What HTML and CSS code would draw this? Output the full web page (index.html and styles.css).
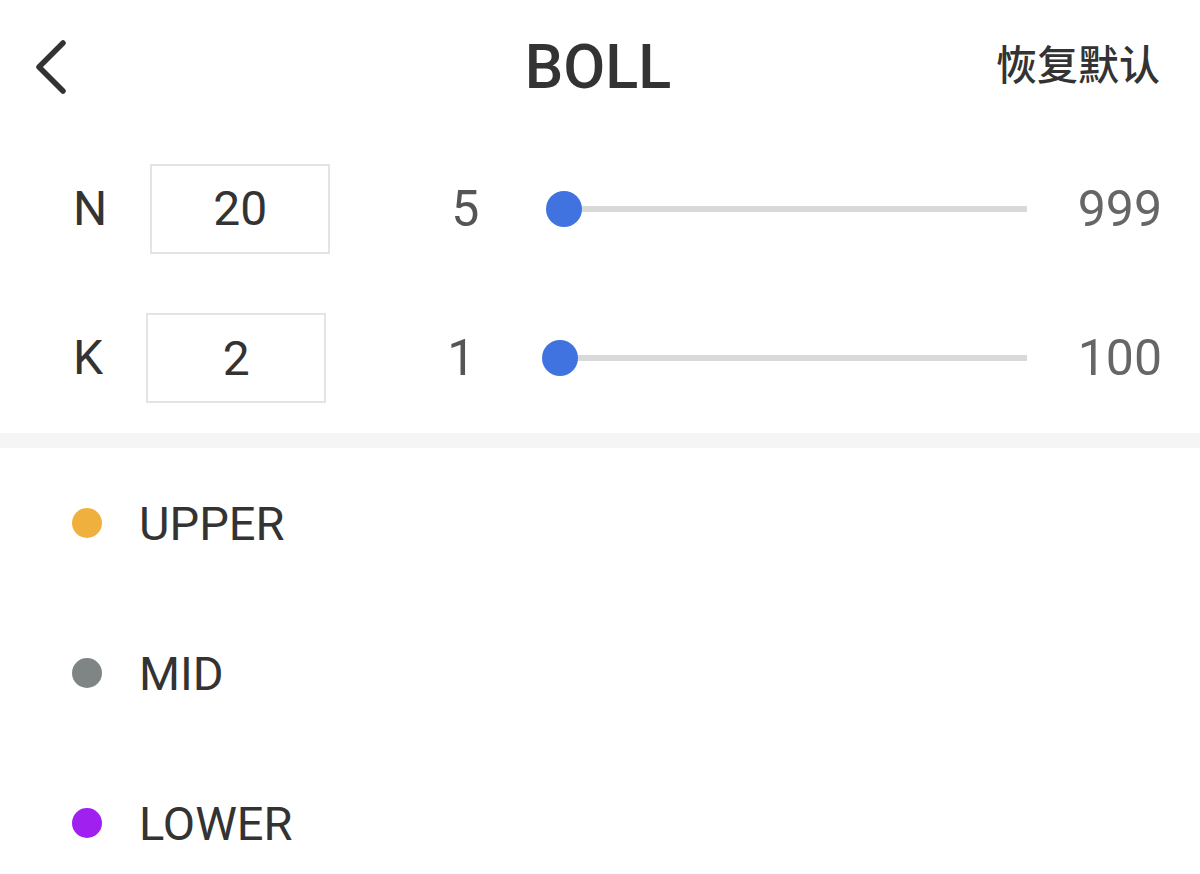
FILE: index.html
```html
<!DOCTYPE html>
<html lang="zh-CN">
<head>
    <meta charset="UTF-8">
    <meta name="viewport" content="width=device-width, initial-scale=1.0">
    <title>BOLL</title>
    <link rel="stylesheet" href="styles.css">
</head>
<body>
    <div class="page">
        <div class="header">
            <div class="back-btn">
                <svg width="40" height="60" viewBox="0 0 40 60">
                    <polyline points="27,6 3,30 27,54" fill="none" stroke="#333" stroke-width="5.5" stroke-linecap="round" stroke-linejoin="round"/>
                </svg>
            </div>
            <div class="title">BOLL</div>
            <div class="reset">恢复默认</div>
        </div>

        <div class="params">
            <div class="param-row">
                <div class="param-label">N</div>
                <div class="param-box">20</div>
                <div class="range-min">5</div>
                <div class="slider">
                    <div class="slider-track"></div>
                    <div class="slider-thumb"></div>
                </div>
                <div class="range-max">999</div>
            </div>
            <div class="param-row">
                <div class="param-label">K</div>
                <div class="param-box">2</div>
                <div class="range-min">1</div>
                <div class="slider">
                    <div class="slider-track"></div>
                    <div class="slider-thumb"></div>
                </div>
                <div class="range-max">100</div>
            </div>
        </div>

        <div class="divider"></div>

        <div class="lines">
            <div class="line-row">
                <span class="dot dot-upper"></span>
                <span class="line-name">UPPER</span>
            </div>
            <div class="line-row">
                <span class="dot dot-mid"></span>
                <span class="line-name">MID</span>
            </div>
            <div class="line-row">
                <span class="dot dot-lower"></span>
                <span class="line-name">LOWER</span>
            </div>
        </div>
    </div>
</body>
</html>
```

FILE: styles.css
```css
body {
    margin: 0;
    font-family: Roboto, 'Noto Sans CJK SC', sans-serif;
    background: #fff;
    color: #333;
}
.page {
    width: 1200px;
    height: 874px;
    overflow: hidden;
}
.header {
    display: grid;
    grid-template-columns: 1fr auto 1fr;
    align-items: center;
    height: 134px;
    padding: 0 40px 0 36px;
}
.back-btn {
    display: flex;
    align-items: center;
}
.back-btn svg {
    display: block;
}
.title {
    font-size: 61px;
    font-weight: 500;
    line-height: 1;
}
.reset {
    justify-self: end;
    font-family: 'Noto Sans CJK SC', sans-serif;
    font-size: 41px;
    font-weight: 500;
    line-height: 1;
    margin-top: -10px;
}
.param-row {
    display: flex;
    align-items: center;
    height: 150px;
    padding: 0 38px 0 73px;
}
.param-row:first-child {
    height: 149px;
}
.param-label {
    margin-right: 43px;
    font-size: 48px;
    line-height: 1;
}
.param-box {
    box-sizing: border-box;
    width: 180px;
    height: 90px;
    border: 2px solid #e4e4e4;
    display: flex;
    align-items: center;
    justify-content: center;
    font-size: 48px;
}
.range-min {
    width: 95px;
    margin-left: 121px;
    font-size: 50px;
    line-height: 1;
    color: #555;
}
.slider {
    flex: 1;
    position: relative;
    height: 36px;
}
.slider-track {
    position: absolute;
    left: 10px;
    right: 0;
    top: 15px;
    height: 6px;
    background: #d9d9d9;
}
.slider-thumb {
    position: absolute;
    left: 0;
    top: 0;
    width: 36px;
    height: 36px;
    border-radius: 50%;
    background: #4173e0;
}
.range-max {
    width: 135px;
    text-align: right;
    font-size: 50px;
    line-height: 1;
    color: #666;
}
.divider {
    height: 15px;
    background: #f5f5f5;
}
.line-row {
    display: flex;
    align-items: center;
    height: 150px;
    padding-left: 72px;
}
.dot {
    width: 30px;
    height: 30px;
    border-radius: 50%;
    margin-right: 37px;
}
.dot-upper {
    background: #f0b03e;
}
.dot-mid {
    background: #7f8484;
}
.dot-lower {
    background: #a020f0;
}
.line-name {
    font-size: 47px;
    line-height: 1;
}
```
